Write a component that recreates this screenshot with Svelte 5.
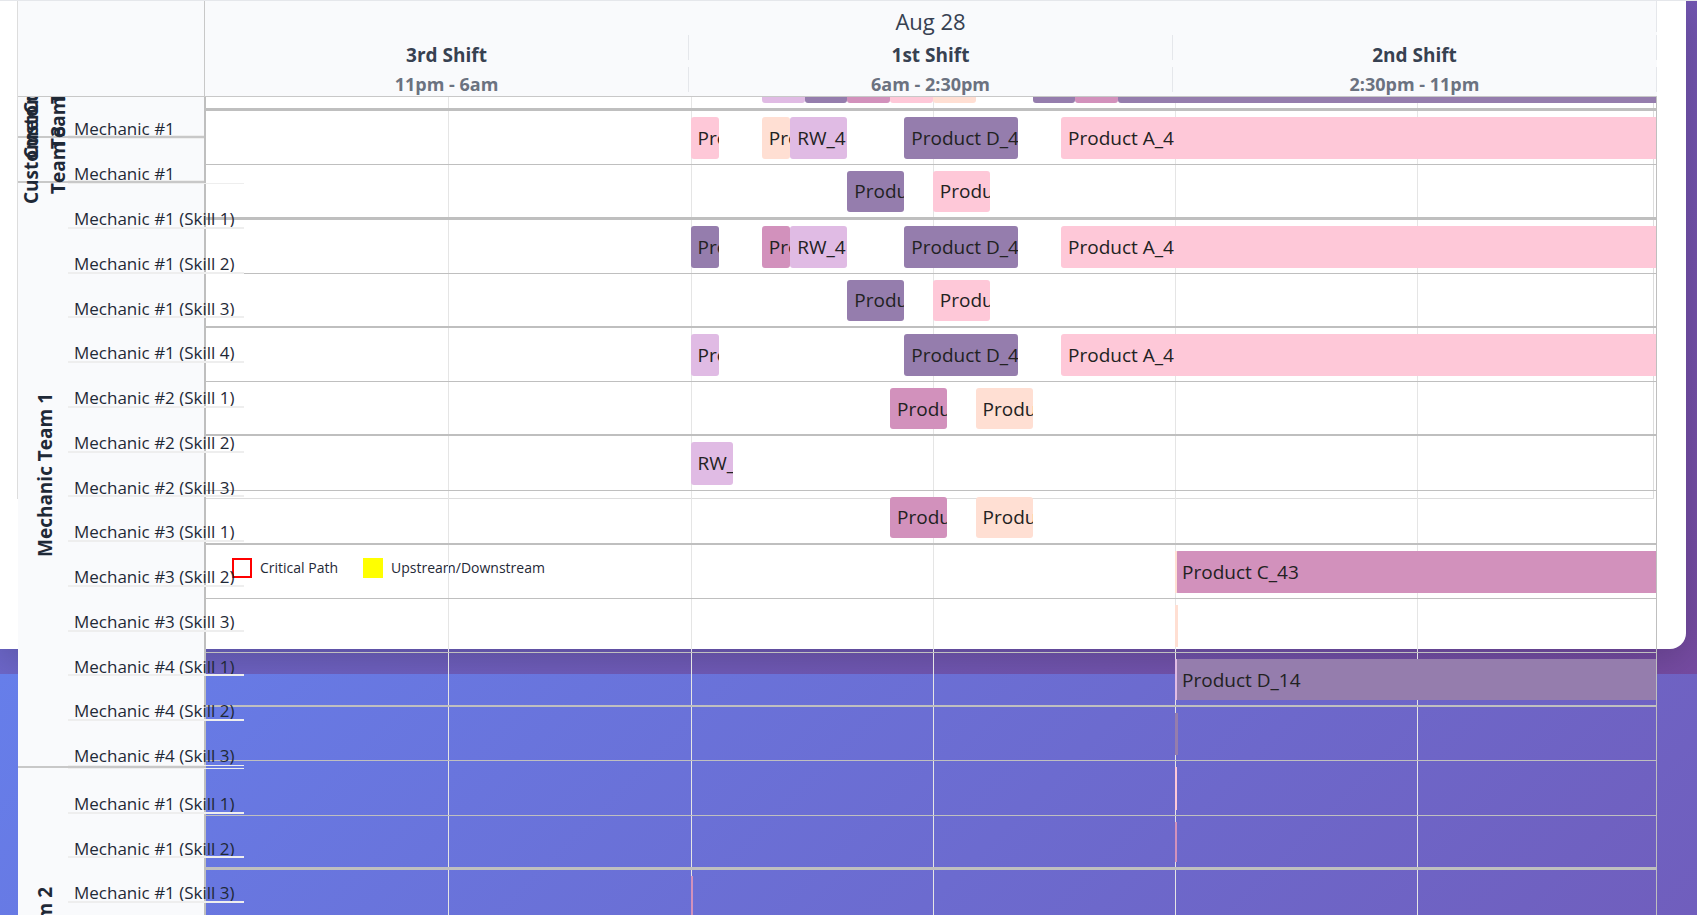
<script>
  const SLOTS = 101.75;
  const rows = [
    { line: 'thick', bars: [[39, 42, 'lilac', ''], [42, 45, 'plum', ''], [45, 48, 'rose', ''], [48, 51, 'pink', ''], [51, 54, 'peach', ''], [58, 61, 'plum', ''], [61, 64, 'rose', ''], [64, 110, 'plum', '']] },
    { line: 'thin', bars: [[34, 36, 'pink', 'Product A'], [39, 41, 'peach', 'Product B'], [41, 45, 'lilac', 'RW_4'], [49, 57, 'plum', 'Product D_4'], [60, 110, 'pink', 'Product A_4']] },
    { line: 'thick', bars: [[45, 49, 'plum', 'Product D'], [51, 55, 'pink', 'Product A']] },
    { line: 'thin', bars: [[34, 36, 'plum', 'Product D'], [39, 41, 'rose', 'Product C'], [41, 45, 'lilac', 'RW_4'], [49, 57, 'plum', 'Product D_4'], [60, 110, 'pink', 'Product A_4']] },
    { line: 'mid', bars: [[45, 49, 'plum', 'Product D'], [51, 55, 'pink', 'Product A']] },
    { line: 'thin', bars: [[34, 36, 'lilac', 'Product E'], [49, 57, 'plum', 'Product D_4'], [60, 110, 'pink', 'Product A_4']] },
    { line: 'mid', bars: [[48, 52, 'rose', 'Product C'], [54, 58, 'peach', 'Product B']] },
    { line: 'thin', bars: [[34, 37, 'lilac', 'RW_4']] },
    { line: 'mid', bars: [[48, 52, 'rose', 'Product C'], [54, 58, 'peach', 'Product B']] },
    { line: 'thin', bars: [[68, 110, 'rose', 'Product C_43'], [68, 68.1, 'peach', '']] },
    { line: 'thin', bars: [[68, 68.2, 'peach', '']] },
    { line: 'mid', bars: [[68, 110, 'plum', 'Product D_14'], [68, 68.1, 'lilac', '']] },
    { line: 'thin', bars: [[68, 68.2, 'plum', '']] },
    { line: 'thin', bars: [[68, 68.1, 'pink', '']] },
    { line: 'thick', bars: [[68, 68.1, 'rose', '']] },
    { line: 'thin', bars: [[34, 34.2, 'rose', '']] }
  ];
  const gridLines = [17, 34, 51, 68, 85];
  const shifts = [
    ['3rd Shift', '11pm - 6am'],
    ['1st Shift', '6am - 2:30pm'],
    ['2nd Shift', '2:30pm - 11pm']
  ];
  const skills = (list) => list.flatMap(([n, count]) =>
    Array.from({ length: count }, (_, i) => `Mechanic #${n} (Skill ${i + 1})`));
  const teams = [
    { name: 'Customer Team 1', small: true, members: ['Mechanic #1'] },
    { name: 'Customer Team 2', small: true, members: ['Mechanic #1'] },
    { name: 'Customer Team 3', small: true, members: ['Mechanic #1'] },
    { name: 'Mechanic Team 1', members: skills([[1, 4], [2, 3], [3, 3], [4, 3]]) },
    { name: 'Mechanic Team 2', members: skills([[1, 3], [2, 3], [3, 3]]) }
  ];
  const pct = (slots) => `${(slots / SLOTS) * 100}%`;
</script>

<main class="page">
  <section class="card">
    <div class="frame"></div>
    <div class="legend">
      <span class="key"><i class="swatch critical"></i>Critical Path</span>
      <span class="key"><i class="swatch stream"></i>Upstream/Downstream</span>
    </div>
  </section>

  <div class="scheduler">
    <header class="head">
      <div class="corner"></div>
      <div class="dates">
        <div class="day">Aug 28</div>
        <div class="shifts">
          {#each shifts as [name, hours]}
            <div class="shift">
              <strong>{name}</strong>
              <span>{hours}</span>
            </div>
          {/each}
        </div>
      </div>
    </header>

    <div class="body">
      <aside class="resources">
        {#each teams as team}
          <div class="team" class:small={team.small}>
            <div class="team-name"><span>{team.name}</span></div>
            <ul class="members">
              {#each team.members as member}
                <li>{member}</li>
              {/each}
            </ul>
          </div>
        {/each}
      </aside>

      <div class="timeline">
        {#each gridLines as g}
          <div class="grid-line" style:left={pct(g)}></div>
        {/each}
        <div class="rows">
          {#each rows as row}
            <div class="row {row.line}">
              {#each row.bars as [from, to, tone, label]}
                <div class="bar {tone}" class:sliver={to - from < 1} style:left={pct(from)} style:width={pct(to - from)}>{label}</div>
              {/each}
            </div>
          {/each}
        </div>
      </div>
    </div>
  </div>
</main>

<style>
  :global(body) {
    margin: 0;
    overflow: hidden;
  }
  .page {
    position: relative;
    height: 100vh;
    overflow: hidden;
    font-family: "Open Sans", "Noto Sans", sans-serif;
    color: #1f2937;
    background:
      linear-gradient(135deg, #667eea 0%, #764ba2 100%) 0 674px / 100% 1390px no-repeat,
      linear-gradient(135deg, #667eea 0%, #764ba2 100%) 0 -716px / 100% 1390px no-repeat;
  }
  .page::before {
    content: "";
    position: absolute;
    z-index: 4;
    inset: 0 0 auto 0;
    height: 1px;
    background: #e5e7eb;
  }
  .card {
    position: absolute;
    inset: 0 11px auto 0;
    height: 649px;
    background: #fff;
    border-radius: 0 0 16px 0;
    box-shadow: 0 10px 40px rgba(0, 0, 0, 0.2);
    clip-path: inset(0 -11px -25px 0);
  }
  .frame {
    height: 497px;
    margin: 0 32px 0 17px;
    border: 1px solid #ddd;
  }
  .legend {
    display: flex;
    gap: 25px;
    padding: 58px 0 0 232px;
    font-size: 14px;
    line-height: 22px;
  }
  .key { display: flex; align-items: center; gap: 8px; }
  .swatch { box-sizing: border-box; width: 20px; height: 20px; }
  .critical { border: 2px solid #f00; background: #fff; }
  .stream { background: #ff0; }

  .scheduler {
    position: relative;
    margin: 0 40px 0 17px;
    padding-left: 1px;
  }
  .head {
    position: relative;
    z-index: 3;
    display: grid;
    grid-template-columns: 187px 1fr;
    box-sizing: border-box;
    height: 97px;
    border-top: 1px solid #e5e7eb;
    border-bottom: 1px solid #c8c8c8;
    background: #f9fafc;
  }
  .corner { border-right: 1px solid #c8c8c8; }
  .dates { text-align: center; color: #374151; }
  .day {
    height: 31px;
    margin-bottom: 3px;
    border-right: 1px solid #e5e7eb;
    font-size: 22px;
    line-height: 41px;
  }
  .shifts { display: grid; grid-template-columns: repeat(3, 1fr); }
  .shift { display: flex; flex-direction: column; gap: 7px; font-weight: 700; }
  .shift > * { height: 25px; border-right: 1px solid #e5e7eb; }
  .shift strong { font-size: 19px; line-height: 41px; font-weight: 700; }
  .shift span { font-size: 18px; line-height: 35px; color: #6b7280; }

  .body {
    display: grid;
    grid-template-columns: 186px 1fr;
    height: calc(100vh - 97px);
    overflow: hidden;
  }
  .resources {
    position: relative;
    z-index: 2;
    margin-top: -49px;
    background: #f9fafc;
    font-size: 17px;
  }
  .team {
    display: grid;
    grid-template-columns: 50px 1fr;
    grid-template-rows: minmax(0, 1fr);
    height: 583px;
    border-bottom: 2px solid #c8c8c8;
  }
  .team.small { height: 43px; }
  .team:last-child { height: 402px; }
  .team-name {
    display: flex;
    align-items: center;
    justify-content: center;
    padding-right: 4px;
    writing-mode: vertical-rl;
    transform: rotate(180deg);
    font-size: 19px;
    line-height: 27px;
    font-weight: 700;
    white-space: nowrap;
  }
  .small .team-name span { width: 54px; height: 90px; flex: none; white-space: normal; text-align: center; }
  .members {
    box-sizing: border-box;
    display: grid;
    grid-auto-rows: minmax(0, 1fr);
    width: 176px;
    margin: 0;
    padding: 0;
    border-top: 1px solid #eee;
    list-style: none;
  }
  .small .members { width: 100%; }
  .members li {
    box-sizing: border-box;
    overflow: hidden;
    padding: 23px 6px 0;
    line-height: 24px;
    border-bottom: 2px solid #eee;
    white-space: nowrap;
  }
  .members li:last-child { border-bottom-width: 1px; }
  .timeline {
    position: relative;
    overflow: hidden;
    border-left: 2px solid #bfbfbf;
    border-right: 1px solid #bfbfbf;
  }
  .grid-line {
    position: absolute;
    top: 0;
    bottom: 0;
    width: 1px;
    background: #e5e5e5;
  }
  .rows {
    position: relative;
    display: grid;
    grid-auto-rows: 1fr;
    height: 867px;
    margin-top: -40px;
  }
  .row { position: relative; min-height: 0; border-bottom: 1px solid #bfbfbf; }
  .row.mid { border-bottom-width: 2px; }
  .row.thick { border-bottom-width: 3px; }
  .bar {
    position: absolute;
    top: 6px;
    bottom: 5px;
    box-sizing: border-box;
    display: flex;
    align-items: center;
    padding-left: 7px;
    overflow: hidden;
    border-radius: 3px;
    font-size: 19px;
    color: #222;
    white-space: nowrap;
  }
  .sliver { min-width: 2px; padding: 0; border-radius: 0; }
  .plum { background: #957dad; }
  .rose { background: #d291bc; }
  .lilac { background: #e0bbe4; }
  .pink { background: #fec8d8; }
  .peach { background: #ffdfd3; }
</style>
